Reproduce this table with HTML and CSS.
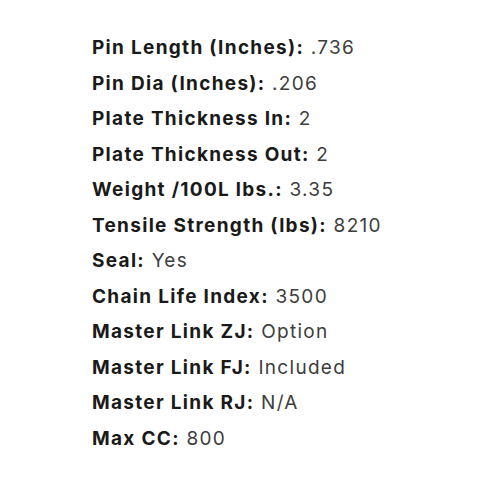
FILE: index.html
```html
<!DOCTYPE html>
<html>
<head>
<meta charset="utf-8">
<link rel="stylesheet" href="styles.css">
</head>
<body>
<ul class="specs">
<li><strong>Pin Length (Inches):</strong> .736</li>
<li><strong>Pin Dia (Inches):</strong> .206</li>
<li><strong>Plate Thickness In:</strong> 2</li>
<li><strong>Plate Thickness Out:</strong> 2</li>
<li><strong>Weight /100L lbs.:</strong> 3.35</li>
<li><strong>Tensile Strength (lbs):</strong> 8210</li>
<li><strong>Seal:</strong> Yes</li>
<li><strong>Chain Life Index:</strong> 3500</li>
<li><strong>Master Link ZJ:</strong> Option</li>
<li><strong>Master Link FJ:</strong> Included</li>
<li><strong>Master Link RJ:</strong> N/A</li>
<li><strong>Max CC:</strong> 800</li>
</ul>
</body>
</html>
```
FILE: styles.css
```css
html, body {
  margin: 0;
  background: #fff;
}
.specs {
  list-style: none;
  margin: 0;
  padding: 30px 0 0 92px;
  font-family: Inter, "Liberation Sans", sans-serif;
  font-size: 19px;
  letter-spacing: 1.3px;
  line-height: 35.5px;
  color: #3d3d3d;
}
.specs strong {
  font-weight: 700;
  color: #1a1a1a;
}
```
